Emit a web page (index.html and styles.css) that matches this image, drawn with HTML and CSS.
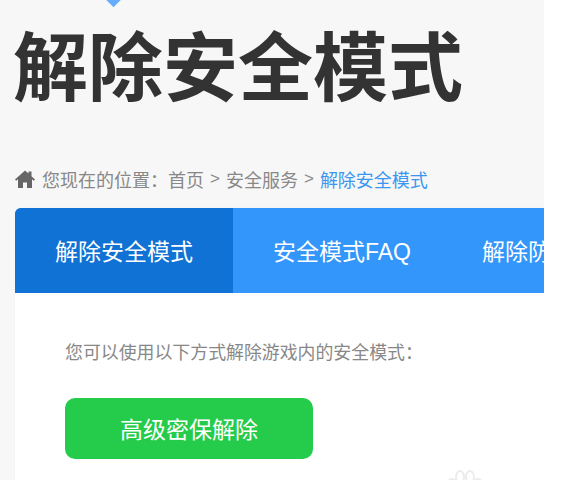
FILE: index.html
```html
<!DOCTYPE html>
<html lang="zh-CN">
<head>
<meta charset="utf-8">
<title>解除安全模式</title>
<link rel="stylesheet" href="styles.css">
</head>
<body>
<div class="page">
  <span class="gem"></span>
  <h1 class="title">解除安全模式</h1>
  <nav class="crumbs">
    <svg class="home" viewBox="0 0 20 18" aria-hidden="true"><path d="M10 0.5 L13.5 3.6 V1.5 H16.5 V6.2 L20 9.5 L18.8 10.8 L17 9.2 V18 H12 V12.5 H8 V18 H3 V9.2 L1.2 10.8 L0 9.5 Z"/></svg>
    <span class="here">您现在的位置：</span>
    <span>首页</span><span class="sep">&gt;</span><span>安全服务</span><span class="sep">&gt;</span><span class="current">解除安全模式</span>
  </nav>
  <section class="card">
    <div class="tabs">
      <div class="tab active">解除安全模式</div>
      <div class="tab">安全模式<span class="latin">FAQ</span></div>
      <div class="tab last">解除防</div>
    </div>
    <div class="body">
      <p class="intro">您可以使用以下方式解除游戏内的安全模式：</p>
      <a class="btn">高级密保解除</a>
      <svg class="paw" viewBox="0 0 40 24" aria-hidden="true"><g fill="none" stroke="#ececec" stroke-width="2"><ellipse cx="14" cy="9" rx="4" ry="6"/><ellipse cx="24" cy="9" rx="4" ry="6"/><circle cx="6" cy="15" r="4"/><circle cx="32" cy="15" r="4"/></g></svg>
    </div>
  </section>
</div>
</body>
</html>
```
FILE: styles.css
```css
* { box-sizing: border-box; }
html, body { margin: 0; height: 100%; background: #fff; }
body { overflow: hidden; font-family: "Noto Sans CJK SC", "Liberation Sans", sans-serif; }
.page { position: relative; width: 544px; height: 480px; overflow: hidden; background: #f7f7f7; padding: 0 0 0 15px; }
.gem { position: absolute; left: 108px; top: -6px; width: 11px; height: 11px; background: #66adff; transform: rotate(45deg); }
.title { margin: 0 0 0 -2px; padding-top: 13px; height: 152px; font-size: 75px; line-height: 100px; font-weight: 700; color: #333; white-space: nowrap; }
.crumbs { display: flex; align-items: center; height: 56px; padding-bottom: 3px; font-size: 18px; color: #888; white-space: nowrap; }
.home { width: 20px; height: 18px; fill: #666; margin-right: 7px; flex: none; }
.sep { margin: 0 6px; font-family: "Liberation Sans", sans-serif; font-size: 17px; }
.current { color: #3a96ee; }
.card { width: 640px; height: 272px; background: #fff; border-radius: 6px 0 0 0; box-shadow: 0 0 2px #eee; }
.tabs { display: flex; height: 85px; background: #3296fb; border-radius: 6px 0 0 0; }
.tab { flex: none; width: 218px; line-height: 85px; text-align: center; font-size: 23px; color: #fff; }
.tab.active { background: #0f72d4; border-radius: 6px 0 0 0; }
.tab.last { text-align: left; padding-left: 31px; }
.latin { font-family: "Liberation Sans", sans-serif; }
.body { position: relative; padding: 43px 0 0 50px; }
.intro { margin: 0; font-size: 17.9px; line-height: 30px; color: #888; white-space: nowrap; }
.btn { display: block; width: 248px; height: 61px; margin-top: 32px; border-radius: 10px; background: #25cc4b; color: #fff; font-size: 23px; line-height: 61px; text-align: center; }
.paw { position: absolute; left: 431px; top: 175px; width: 40px; height: 24px; }
```
